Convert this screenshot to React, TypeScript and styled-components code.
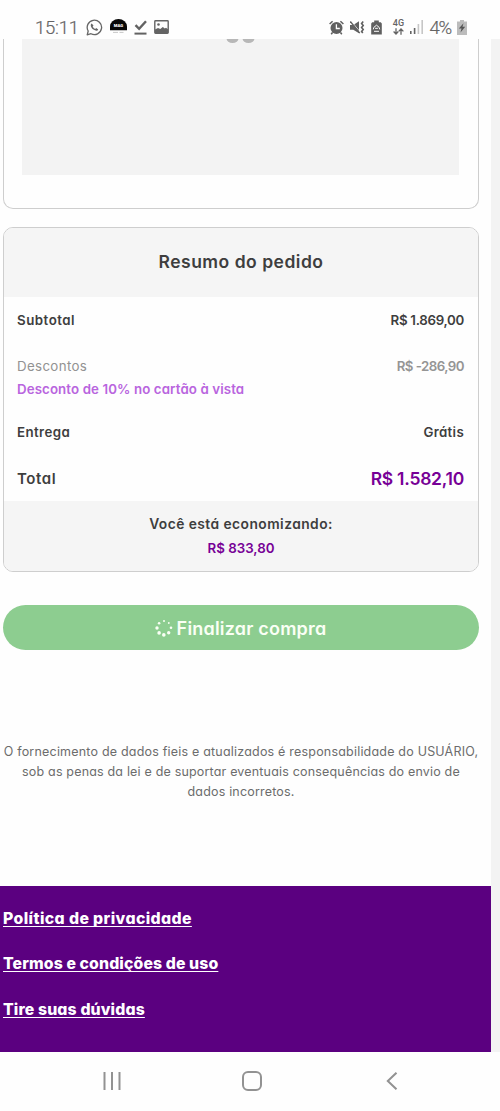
import React from "react";
import styled, { createGlobalStyle } from "styled-components";

const GlobalStyle = createGlobalStyle`
  * { box-sizing: border-box; }
  body {
    margin: 0;
    background: #fefefe;
    font-family: Inter, "Open Sans", sans-serif;
    font-feature-settings: "cv11" 1;
    color: #3e3e3e;
  }
`;

const Screen = styled.div`
  width: 500px;
  height: 1111px;
  display: flex;
  flex-direction: column;
  overflow: hidden;
  background: #fefefe;
`;

const StatusBar = styled.header`
  flex: none;
  height: 39px;
  padding: 15px 33px 0 35px;
  display: flex;
  justify-content: space-between;
  color: #646464;
  svg { display: block; flex: none; }
`;

const StatusGroup = styled.div<{ $gap: number }>`
  display: flex;
  align-items: center;
  height: 24px;
  gap: ${(p) => p.$gap}px;
`;

const StatusText = styled.span<{ $spacing?: number }>`
  font: 300 18.5px/24px Roboto, sans-serif;
  letter-spacing: ${(p) => p.$spacing ?? 0}px;
  padding-top: 1px;
  -webkit-text-stroke: 0.2px currentColor;
  white-space: nowrap;
`;

const Network = styled.div`
  display: flex;
  flex-direction: column;
  align-items: center;
  width: 12px;
  margin: 0 0 0 4px;
  font: 500 9px/9px Roboto, sans-serif;
`;

const Viewport = styled.main`
  flex: none;
  height: 1013px;
  background: #f3f3f3;
`;

const Page = styled.div`
  width: 491px;
  height: 1013px;
  background: #fefefe;
  display: flex;
  flex-direction: column;
`;

const Card = styled.section`
  flex: none;
  margin: 0 12px 0 3px;
  border: 1.5px solid #cecece;
  border-radius: 10px;
  overflow: hidden;
  background: #fefefe;
`;

const PaymentCard = styled(Card)`
  height: 170px;
  border-top: 0;
  border-radius: 0 0 10px 10px;
  padding: 0 19px 34px 18px;
`;

const LoadingPanel = styled.div`
  height: 136px;
  background: #f3f3f3;
  svg { display: block; margin: 0 auto; }
`;

const SummaryCard = styled(Card)`
  height: 345px;
  margin-top: 18px;
`;

const SummaryTitle = styled.h2`
  margin: 0;
  height: 69px;
  line-height: 68px;
  background: #f5f5f5;
  text-align: center;
  font-size: 17.5px;
  font-weight: 600;
  letter-spacing: 0.5px;
`;

const Row = styled.div<{ $tall?: boolean }>`
  height: ${(p) => (p.$tall ? 66 : 46)}px;
  padding: 12px 14px 0 13px;
  display: flex;
  justify-content: space-between;
  line-height: 23px;
`;

const Label = styled.div<{ $size?: number; $spacing?: number; $muted?: boolean }>`
  font-size: ${(p) => p.$size ?? 13.3}px;
  font-weight: ${(p) => (p.$muted ? 400 : 600)};
  letter-spacing: ${(p) => p.$spacing ?? 0}px;
  color: ${(p) => (p.$muted ? "#929292" : "#3e3e3e")};
  white-space: nowrap;
`;

const Promo = styled(Label)`
  color: #b965de;
`;

const Amount = styled(Label)<{ $color?: string }>`
  font-weight: 600;
  color: ${(p) => p.$color ?? "#3e3e3e"};
`;

const Savings = styled.div`
  height: 70px;
  padding-top: 11px;
  background: #f5f5f5;
  display: flex;
  flex-direction: column;
  align-items: center;
  line-height: 24px;
`;

const SubmitButton = styled.button`
  flex: none;
  height: 45px;
  margin: 33px 12px 0 3px;
  padding: 1px 1px 0 0;
  border: 0;
  border-radius: 23px;
  background: #8dcd90;
  color: #fafff5;
  display: flex;
  align-items: center;
  justify-content: center;
  gap: 4px;
  font: 600 18px Inter, sans-serif;
  font-feature-settings: "cv11" 1;
  letter-spacing: 0.2px;
`;

const Disclaimer = styled.p`
  flex: none;
  margin: 92px 9px 0 0;
  text-align: center;
  font-size: 12.5px;
  line-height: 20px;
  color: #6c6c6c;
`;

const DisclaimerLine = styled.span<{ $spacing: number }>`
  display: block;
  white-space: nowrap;
  letter-spacing: ${(p) => p.$spacing}px;
`;

const Footer = styled.footer`
  margin-top: auto;
  height: 166px;
  padding: 10px 3px 0;
  background: #5b0080;
  display: flex;
  flex-direction: column;
  align-items: flex-start;
`;

const FooterLink = styled.a<{ $spacing: number }>`
  height: 45.3px;
  line-height: 46px;
  color: #fff;
  font-size: 15.8px;
  font-weight: 800;
  letter-spacing: ${(p) => p.$spacing}px;
  text-decoration: underline;
  text-decoration-thickness: 1.2px;
  text-underline-offset: 1.5px;
  text-decoration-skip-ink: none;
`;

const NavBar = styled.nav`
  flex: 1;
  padding: 0 38px 1px 42px;
  display: grid;
  grid-template-columns: repeat(3, 1fr);
  place-items: center;
  svg { display: block; }
`;

const WhatsApp = () => (
  <svg width="17" height="17" viewBox="0 0 17 17" fill="none" stroke="#666" strokeWidth="1.3">
    <path d="M1.2 15.8l1-3.8A7.2 7.2 0 1 1 5 14.7z" strokeLinejoin="round" />
    <path d="M5.7 4.5c-2 1.3-.5 4.5 1.7 6.1 2.1 1.5 4.2 1.7 4.8-.2l-2-1.4-1 .9c-1.1-.4-2-1.3-2.5-2.4l.8-1z" fill="#666" stroke="none" />
  </svg>
);

const StoreBadge = () => (
  <svg width="17" height="16" viewBox="0 0 17 16">
    <path d="M0 11.2V7.5a8.5 7.5 0 0 1 17 0v3.7z" fill="#080808" />
    <text x="8.5" y="8.2" textAnchor="middle" fontFamily="Roboto" fontWeight="900" fontSize="4.2" fill="#fff">MAG</text>
    <path d="M3 13.4h5m1.5 0h4" stroke="#c7c7c7" strokeWidth="1" />
  </svg>
);

const DoneIcon = () => (
  <svg width="13" height="15" viewBox="0 0 13 15" fill="none" stroke="#626262" strokeWidth="2">
    <path d="M1.5 5.2l3.6 3.6L12 1.2" strokeWidth="2.4" />
    <path d="M.5 13.6h12" />
  </svg>
);

const PictureIcon = () => (
  <svg width="15" height="14" viewBox="0 0 15 14">
    <rect x=".8" y=".8" width="13.4" height="12.4" rx=".7" fill="none" stroke="#646464" strokeWidth="1.4" />
    <path d="M1 13V9.6l3-1.5 2.3 1 2.5-2.2 2 1.6 1.2-.7L14 9.2V13z" fill="#646464" />
    <circle cx="4.5" cy="4.5" r="1.3" fill="#646464" />
  </svg>
);

const AlarmIcon = () => (
  <svg width="15" height="15" viewBox="0 0 15 15">
    <circle cx="7.5" cy="8" r="6" fill="#606060" />
    <path d="M.6 4l3-2.8M14.4 4l-3-2.8M3.5 12.5l-1.3 1.7M11.5 12.5l1.3 1.7" stroke="#606060" strokeWidth="1.5" />
    <path d="M7.4 4.2V8.5h3.4" fill="none" stroke="#fff" strokeWidth="1.3" />
  </svg>
);

const MuteIcon = () => (
  <svg width="15" height="15" viewBox="0 0 15 15" fill="none" stroke="#606060">
    <path d="M0 5h3.3L9 1.2v12L3.3 9.8H0z" fill="#606060" stroke="none" />
    <path d="M1 .8l9.3 11.4" stroke="#fefefe" strokeWidth=".8" />
    <path d="M.3 1.5l9.5 11.7" strokeWidth="1.3" />
    <path d="M13.2 1.5l-1.6 2 1.6 2-1.6 2 1.6 2-1.6 2 1.2 1.6" strokeWidth="1.6" />
  </svg>
);

const BatterySaverIcon = () => (
  <svg width="11" height="15" viewBox="0 0 11 15">
    <path d="M1.2 2.2h2V.5h4.6v1.7h2l1 1.2v11.1H.2V3.4z" fill="#606060" />
    <path d="M2.3 9.4l.5-2 2.7-2.2 2.7 2.2.5 2M3 11.3h5M4.1 8.3h2.8" fill="none" stroke="#fff" strokeWidth="1" />
  </svg>
);

const DataArrows = () => (
  <svg width="11" height="7" viewBox="0 0 11 7" fill="none" stroke="#646464" strokeWidth="1.3">
    <path d="M3 .2v5.5M.6 3.5L3 6l2.3-2.5M8 6.7V1.2M5.7 3.4L8 1l2.4 2.4" />
  </svg>
);

const SignalIcon = () => (
  <svg width="13" height="14" viewBox="0 0 13 14">
    <path d="M0 11h1.6v3H0zM3.8 8h1.6v6H3.8z" fill="#646464" />
    <path d="M7.6 4h1.6v10H7.6zM11.4 0H13v14h-1.6z" fill="#c6c6c6" />
  </svg>
);

const ChargingIcon = () => (
  <svg width="10" height="15" viewBox="0 0 10 15">
    <path d="M3 0h4v1.5h3V15H0V1.5h3z" fill="#bcbcbc" />
    <path d="M6.5 3.2L1.8 8.5h2.7l-1 4 4.7-5.7H5.5z" fill="#555" />
  </svg>
);

const LoadingDots = () => (
  <svg width="30" height="5" viewBox="0 0 30 5" fill="#b7b7b7">
    <ellipse cx="6.5" cy="-.7" rx="6" ry="4.8" />
    <ellipse cx="22.5" cy="-.7" rx="6" ry="4.8" />
  </svg>
);

const Spinner = () => (
  <svg width="18" height="18" viewBox="0 0 18 18" fill="#fafff5">
    <circle cx="9" cy="2" r="1" />
    <circle cx="13.8" cy="4" r=".9" />
    <circle cx="16" cy="8.8" r="1.3" />
    <circle cx="13.7" cy="13.8" r="1.7" />
    <circle cx="8.8" cy="15.9" r="1.8" />
    <circle cx="4.1" cy="13.9" r="1.8" />
    <circle cx="2" cy="9" r="1.7" />
    <circle cx="4.1" cy="4.2" r="1.3" />
  </svg>
);

const footerLinks = [
  { text: "Política de privacidade", spacing: 0.4 },
  { text: "Termos e condições de uso", spacing: 0.12 },
  { text: "Tire suas dúvidas", spacing: 0.14 },
];

export default function App() {
  return (
    <Screen>
      <GlobalStyle />
      <StatusBar>
        <StatusGroup $gap={7}>
          <StatusText $spacing={-0.2}>15:11</StatusText>
          <WhatsApp />
          <StoreBadge />
          <DoneIcon />
          <PictureIcon />
        </StatusGroup>
        <StatusGroup $gap={6}>
          <AlarmIcon />
          <MuteIcon />
          <BatterySaverIcon />
          <Network>
            4G
            <DataArrows />
          </Network>
          <SignalIcon />
          <StatusText $spacing={-1.2}>4%</StatusText>
          <ChargingIcon />
        </StatusGroup>
      </StatusBar>

      <Viewport>
        <Page>
          <PaymentCard>
            <LoadingPanel>
              <LoadingDots />
            </LoadingPanel>
          </PaymentCard>

          <SummaryCard>
            <SummaryTitle>Resumo do pedido</SummaryTitle>
            <Row>
              <Label $spacing={0.5}>Subtotal</Label>
              <Amount $spacing={-0.3}>R$ 1.869,00</Amount>
            </Row>
            <Row $tall>
              <div>
                <Label $muted $spacing={0.35}>Descontos</Label>
                <Promo $spacing={0.1}>Desconto de 10% no cartão à vista</Promo>
              </div>
              <Amount $color="#959595" $spacing={-0.55}>R$ -286,90</Amount>
            </Row>
            <Row>
              <Label $spacing={0.4}>Entrega</Label>
              <Amount $spacing={0.3}>Grátis</Amount>
            </Row>
            <Row>
              <Label $size={15} $spacing={0.6}>Total</Label>
              <Amount $size={17.5} $color="#770096" $spacing={-0.25}>R$ 1.582,10</Amount>
            </Row>
            <Savings>
              <Label $size={13.8} $spacing={0.45}>Você está economizando:</Label>
              <Amount $color="#770096" $spacing={0}>R$ 833,80</Amount>
            </Savings>
          </SummaryCard>

          <SubmitButton>
            <Spinner />
            Finalizar compra
          </SubmitButton>

          <Disclaimer>
            <DisclaimerLine $spacing={0.2}>O fornecimento de dados fieis e atualizados é responsabilidade do USUÁRIO,</DisclaimerLine>
            <DisclaimerLine $spacing={0.18}>sob as penas da lei e de suportar eventuais consequências do envio de</DisclaimerLine>
            <DisclaimerLine $spacing={0.18}>dados incorretos.</DisclaimerLine>
          </Disclaimer>

          <Footer>
            {footerLinks.map((link) => (
              <FooterLink key={link.text} $spacing={link.spacing}>{link.text}</FooterLink>
            ))}
          </Footer>
        </Page>
      </Viewport>

      <NavBar>
        <svg width="18" height="18" viewBox="0 0 18 18" stroke="#929292" strokeWidth="2">
          <path d="M1.5 0v18M9 0v18M16.5 0v18" />
        </svg>
        <svg width="20" height="20" viewBox="0 0 20 20" fill="none" stroke="#929292" strokeWidth="2">
          <rect x="1" y="1" width="18" height="18" rx="5" />
        </svg>
        <svg width="12" height="18" viewBox="0 0 12 18" fill="none" stroke="#929292" strokeWidth="2">
          <path d="M10.5 .7L1.8 9l8.7 8.3" />
        </svg>
      </NavBar>
    </Screen>
  );
}
